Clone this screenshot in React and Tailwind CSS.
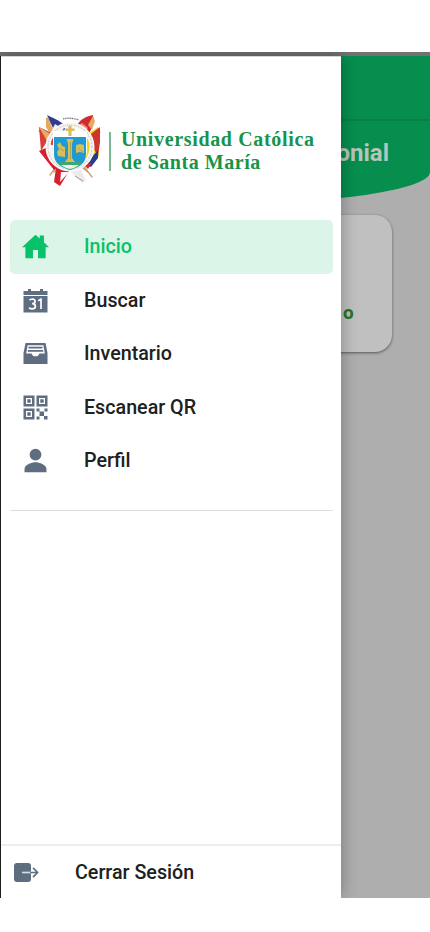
import { IoHomeSharp, IoPersonSharp } from "react-icons/io5";

function CalendarNumber({ className }) {
  return (
    <svg viewBox="0 0 27 27" className={className}>
      <path d="M1.5 4H6V2h3v2h9V2h3v2h4.500v4h-24z" fill="currentColor" />
      <path d="M1.500 9h24v16.500h-24z" fill="currentColor" />
      <path
        d="M7.500 13.200q1-1.200 2.900-1.200 2.700.1 2.700 2.400 0 2.200-3 2.300 3.300 0 3.300 2.700-.1 2.500-3.200 2.500-2 0-3.100-1.300M16.200 13.700l2.800-1.500v9.900"
        fill="none"
        stroke="#fff"
        strokeWidth="1.700"
      />
    </svg>
  );
}

function FileTray({ className }) {
  return (
    <svg viewBox="0 0 27 27" className={className}>
      <path
        d="M3.500 3h20l2 10v11h-24V13zm2.100 2.200L4.200 13.500h5.500a3.900 3.700 0 0 0 7.600 0h5.500L21.400 5.200z"
        fill="currentColor"
        fillRule="evenodd"
      />
      <path d="M6.500 7.600h14M5.800 10.900h15.400" fill="none" stroke="currentColor" strokeWidth="1.700" />
    </svg>
  );
}

function QrCode({ className }) {
  return (
    <svg viewBox="0 0 27 27" className={className} fill="currentColor">
      <path
        d="M1.500 1.500h11v11h-11zm2.500 2.500v6h6V4zM14.500 1.500h11v11h-11zM17 4v6h6V4zM1.500 14.500h11v11h-11zM4 17v6h6v-6z"
        fillRule="evenodd"
      />
      <path d="M5.300 5.300h3.400v3.400H5.300zM18.300 5.300h3.400v3.400h-3.400zM5.300 18.300h3.400v3.400H5.300z" />
      <path d="M14.500 14.500h3v3h-3zM22.500 14.500h3v3h-3zM17.500 17.500h4.500v4.500h-4.500zM14.500 22.500h3v3h-3zM22 22h3.500v3.500H22z" />
    </svg>
  );
}

function LogOut({ className }) {
  return (
    <svg viewBox="0 0 29 29" className={className}>
      <rect x="3" y="5" width="17" height="19" rx="3" fill="currentColor" />
      <path d="M11 14.500h9" fill="none" stroke="#d5dbe1" strokeWidth="1.700" />
      <path
        d="M20 14.500h6.500M22.500 10.300l4.200 4.200-4.200 4.200"
        fill="none"
        stroke="currentColor"
        strokeWidth="1.700"
        strokeLinecap="round"
        strokeLinejoin="round"
      />
    </svg>
  );
}

const items = [
  { label: "Inicio", Icon: IoHomeSharp, active: true },
  { label: "Buscar", Icon: CalendarNumber },
  { label: "Inventario", Icon: FileTray },
  { label: "Escanear QR", Icon: QrCode },
  { label: "Perfil", Icon: IoPersonSharp },
];

function Crest() {
  return (
    <svg viewBox="0 0 64 76" className="h-[76px] w-[64px] shrink-0">
      {/* flag poles */}
      <g stroke="#c9a06a" strokeWidth="1.3" strokeLinecap="round">
        <path d="M9 5 54 64M1 18l50 42M55 5 12 62M62 19 16 59" />
      </g>
      {/* flags on the left */}
      <path d="M9 2c5 3 12 4 19 12l-5 9-6-4z" fill="#303b91" />
      <path d="m8 4 8 13-3 5-5-8z" fill="#e6a75c" />
      <path d="m17 11 9 6-4 6-8-6z" fill="#f4eff0" />
      <path d="m1 14 15 7 1 12-9-3-5 8z" fill="#d83f38" />
      <path d="m1 14 10 6-2 8z" fill="#e6ad61" />
      <path d="m1 38 9-4 13 20-7 3z" fill="#d8202c" />
      <path d="m9 36 9 15 6-1-9-16z" fill="#f8eeee" />
      {/* flags on the right */}
      <path d="M55 2c-8 2-13 4-16 11l10 11 6-11z" fill="#cf2c30" />
      <path d="m55 3-5 9 4 5 3-9z" fill="#e9a763" />
      <path d="m44 10 6 5-4 6-7-8z" fill="#ee8f84" />
      <path d="m60 14-12 8-4 22 10 8 7-9-1-14z" fill="#f0d21f" />
      <path d="m62 14-9 7 0 10 7 12 2-14z" fill="#ce352d" />
      <path d="m60 37-13 15 6 2 7-9z" fill="#273a8d" />
      <path d="m45 51 9-1-4 6z" fill="#cf2934" />
      {/* lower ribbons */}
      <path d="m18 55 13 3-9 15-6-4z" fill="#d91f2b" />
      <path d="m23 59 8 0-9 10z" fill="#fff" />
      <path d="m33 59 10-2 5 11-4 2z" fill="#eeeaec" />
      <path d="m37 63 8 5" stroke="#999" />
      {/* motto ring */}
      <path
        d="M32 34m-22 0a22 22 0 1 1 44 0 22 22 0 1 1-44 0"
        fill="none"
        stroke="#f7f6f5"
        strokeWidth="5"
      />
      <circle
        cx="32"
        cy="34"
        r="22"
        fill="none"
        stroke="#77706c"
        strokeWidth="1.200"
        strokeDasharray="1 1.2 .5 1"
        opacity=".45"
      />
      <path d="M15 18h34v17c0 15-6 19-17 22-11-3-17-7-17-22z" fill="#fff" />
      {/* shield */}
      <path d="M16 24h32v17c0 9-6 13-16 16-10-3-16-7-16-16z" fill="#1d9bd2" />
      <path d="M20 49h24q-5 6-12 8-7-2-12-8" fill="#43a66e" />
      <path d="M23 52h18l-5 3-4 1-4-1z" fill="#e9f2ed" />
      <g fill="#d9bd58">
        <path d="M30.500 12.500h3v3h3v2.500h-3v5h-3v-5h-3v-2.500h3z" />
        <path d="M28.500 26h7l-1.500 5v14l3 4H27l3-4V31z" />
        <path d="m19 32 3-3 2 4 3 1 0 10-7-1-1-4 2-3z" />
        <path d="m38 32 4-1 4 1v8l-4-1-4 1z" />
      </g>
      <path d="M32.500 29v17M21 35l5 3m14-3 5 4" stroke="#9c924e" strokeWidth=".7" />
      <path d="M25 6q7-2 16 1" fill="none" stroke="#777" strokeWidth="1.300" strokeDasharray="1.2 .6" />
    </svg>
  );
}

export default function App() {
  return (
    <div className="h-[932px] w-[430px] overflow-hidden bg-white pt-[52px] font-['Roboto',sans-serif]">
      <div className="relative h-[846px] overflow-hidden bg-[#aeaeae]">
        <div className="h-[4px] bg-[#727272]" />
        <header className="h-[148px] rounded-br-[215px_32px] bg-[#068e4f]">
          <div className="h-[65px] border-b-2 border-[#087f48]" />
          <h1 className="pt-[17px] pr-[41px] text-right text-[24px] leading-[30px] font-bold text-[#b5c5bc]">
            onial
          </h1>
        </header>
        <section className="mt-[11px] ml-[38px] flex h-[137px] w-[354px] justify-end rounded-[17px] bg-[#c0c0c0] pt-[85px] pr-[38px] font-['Open_Sans',sans-serif] text-[18px] leading-[25px] font-bold text-[#287529] shadow-[0_1px_3px_rgba(0,0,0,0.5)]">
          o
        </section>

        <aside className="absolute top-[4px] left-0 flex h-[842px] w-[341px] flex-col border-l border-[#201c1d] bg-white shadow-[0_0_16px_rgba(0,0,0,0.32)]">
          <div className="flex h-[164px] items-center border-t border-[#d5d5d5] pt-[25px] pl-[37px]">
            <Crest />
            <div className="ml-[7px] h-[39px] w-[2px] shrink-0 bg-[#79b890]" />
            <div className="ml-[10px] font-['Liberation_Serif',serif] text-[20px] leading-[23px] font-bold whitespace-nowrap text-[#16944a]">
              <div className="tracking-[0.65px]">Universidad Católica</div>
              <div className="tracking-[0.55px]">de Santa María</div>
            </div>
          </div>
          <nav className="mr-[8px] ml-[9px] flex h-[291px] flex-col border-b border-[#dedede]">
            {items.map(({ label, Icon, active }) => (
              <a
                key={label}
                className={
                  active
                    ? "flex h-[53.5px] shrink-0 items-center rounded-[5px] bg-[#dbf5e8] pl-[12px] text-[#08c269]"
                    : "flex h-[53.5px] shrink-0 items-center pl-[12px] text-[#5e6d80]"
                }
              >
                <Icon className="size-[27px]" />
                <span
                  className={
                    active
                      ? "ml-[35px] pt-px text-[19.7px] font-medium"
                      : "ml-[35px] pt-px text-[19.7px] font-medium text-[#202020]"
                  }
                >
                  {label}
                </span>
              </a>
            ))}
          </nav>
          <footer className="mt-auto flex h-[54px] items-center border-t-2 border-[#eeeeee] pl-[10px]">
            <LogOut className="size-[29px] text-[#5e6d80]" />
            <span className="ml-[35px] pt-px text-[19.7px] font-medium text-[#202020]">
              Cerrar Sesión
            </span>
          </footer>
        </aside>
      </div>
    </div>
  );
}
